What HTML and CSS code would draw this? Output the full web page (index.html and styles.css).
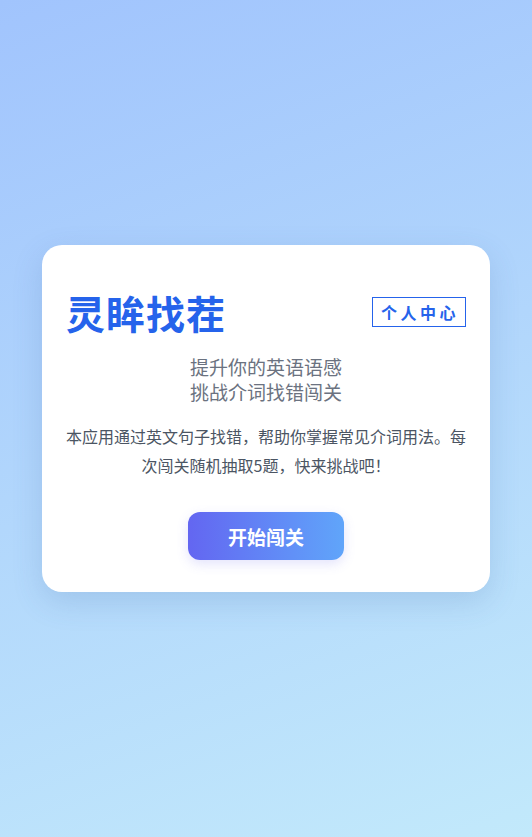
FILE: index.html
```html
<!DOCTYPE html>
<html lang="zh-CN">
<head>
<meta charset="UTF-8">
<title>灵眸找茬</title>
<link rel="stylesheet" href="styles.css">
</head>
<body>
<main class="page">
  <section class="card">
    <header class="card-header">
      <h1 class="title">灵眸找茬</h1>
      <button class="profile-btn">个人中心</button>
    </header>
    <div class="subtitle">
      <p class="subtitle-line">提升你的英语语感</p>
      <p class="subtitle-line">挑战介词找错闯关</p>
    </div>
    <p class="desc">本应用通过英文句子找错，帮助你掌握常见介词用法。每次闯关随机抽取5题，快来挑战吧！</p>
    <div class="actions">
      <button class="start-btn">开始闯关</button>
    </div>
  </section>
</main>
</body>
</html>
```

FILE: styles.css
```css
* { box-sizing: border-box; }
html, body { margin: 0; padding: 0; }
body {
  font-family: "Noto Sans CJK SC", "Noto Sans", sans-serif;
  min-height: 100vh;
  background: linear-gradient(160deg, #a1c4fd 0%, #c2e9fb 100%);
}
.page {
  min-height: 100vh;
  display: flex;
  align-items: center;
  justify-content: center;
}
.card {
  width: 448px;
  background: #fff;
  border-radius: 20px;
  padding: 41px 24px 32px;
  text-align: center;
  box-shadow: 0 10px 30px rgba(60, 100, 160, 0.18);
}
.card-header {
  display: flex;
  align-items: center;
  justify-content: space-between;
  height: 52px;
}
.title {
  margin: 0;
  font-size: 39px;
  line-height: 52px;
  font-weight: 700;
  color: #2563eb;
  letter-spacing: 1px;
}
.profile-btn {
  font-family: inherit;
  background: #fff;
  border: 1px solid #2563eb;
  color: #2563eb;
  font-size: 16px;
  font-weight: 600;
  line-height: 20px;
  letter-spacing: 3.5px;
  padding: 4px 6px 4px 8px;
  border-radius: 0;
}
.subtitle {
  margin-top: 16px;
  display: flex;
  flex-direction: column;
}
.subtitle-line {
  margin: 0;
  font-size: 19px;
  line-height: 25px;
  color: #6b7280;
}
.desc {
  margin: 18px 0 0;
  font-size: 16px;
  line-height: 29px;
  color: #4b5563;
}
.actions {
  margin-top: 32px;
  display: flex;
  justify-content: center;
}
.start-btn {
  font-family: inherit;
  border: none;
  width: 156px;
  height: 48px;
  border-radius: 12px;
  background: linear-gradient(90deg, #6366f1 0%, #60a5fa 100%);
  color: #fff;
  font-size: 19px;
  font-weight: 700;
  box-shadow: 0 4px 12px rgba(99, 102, 241, 0.18);
}
```
